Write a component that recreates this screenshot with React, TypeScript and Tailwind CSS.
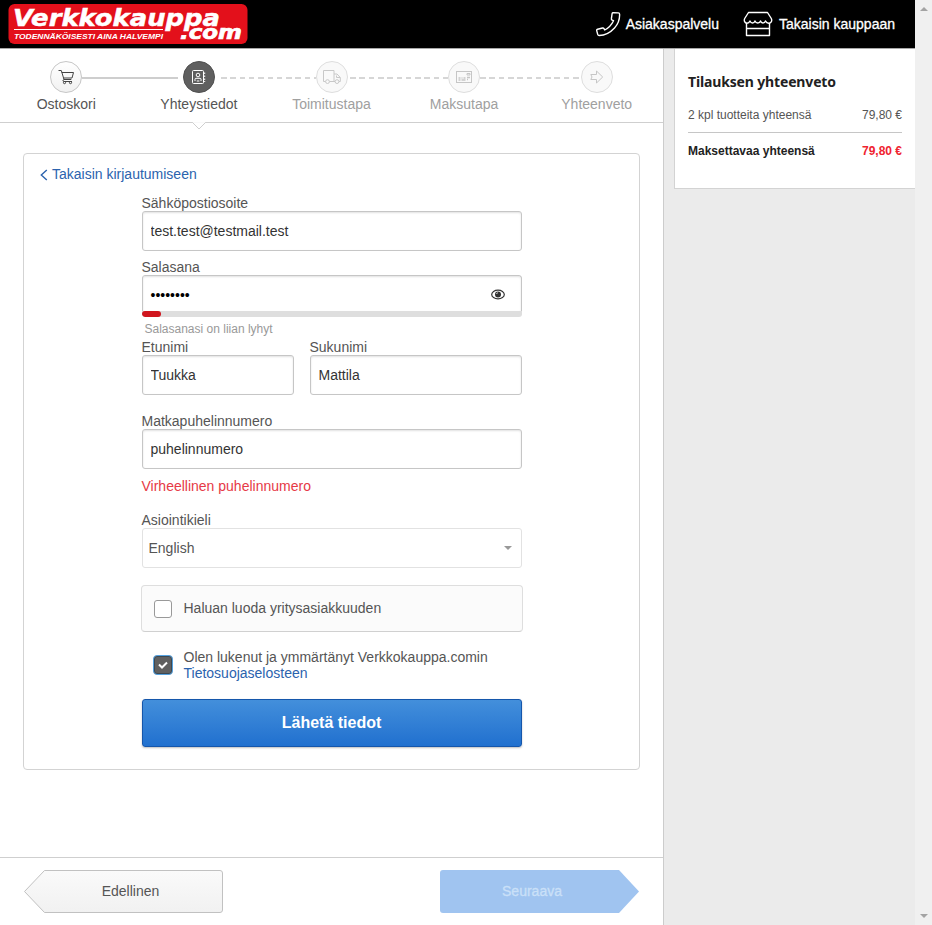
import React from "react";

const Logo = () => (
  <svg width="240" height="40" viewBox="0 0 240 40" className="block" role="img" aria-label="Verkkokauppa.com">
    <rect x=".5" width="239" height="40" rx="6" fill="#e3101b" />
    <g fill="#fff" fontWeight="bold" fontStyle="italic">
      <rect x="6" y="25" width="149" height="1" />
      <text x="5" y="21.7" fontSize="22.5" textLength="207" lengthAdjust="spacingAndGlyphs" fontFamily="DejaVu Sans" stroke="#fff" strokeWidth="0.5">Verkkokauppa</text>
      <text x="6" y="34.7" fontSize="7.6" textLength="149" lengthAdjust="spacingAndGlyphs" fontFamily="Liberation Sans">TODENNÄKÖISESTI AINA HALVEMPI</text>
      <text x="172" y="35.300" fontSize="19.5" textLength="62" lengthAdjust="spacingAndGlyphs" fontFamily="DejaVu Sans" stroke="#fff" strokeWidth="0.7">.com</text>
    </g>
  </svg>
);

const PhoneIcon = () => (
  <svg width="26" height="26" viewBox="0.5 0 26 26" fill="none" stroke="#fff" strokeWidth="1.4" strokeLinejoin="round">
    <path d="M17.600 1.700 L22.900 1.900 Q24 2 24.100 3.200 C24.300 8.300 22.700 13 19 17 C14.800 21.600 9 24.400 3.700 24.500 Q2.500 24.500 2.200 23.400 L1.200 19.600 Q1 18.500 2.100 18.200 L7 17 Q8.100 16.800 8.500 17.700 L9.200 19 C13 17 16 14 18 9.700 L16.600 9.100 Q15.700 8.700 15.900 7.700 L16.600 2.600 Q16.800 1.700 17.600 1.700Z" />
  </svg>
);

const StoreIcon = () => (
  <svg width="30" height="26" viewBox="0 0 30 26" fill="none" stroke="#fff" strokeWidth="1.400" strokeLinejoin="round">
    <path d="M5.500 1.500 H24.500 L28.300 7.500 C29.500 10 27.800 12.300 25.700 12.200 C23.800 12.200 23 11 22.500 10 C21.500 12.600 18.200 12.600 17.500 10 C16.500 12.600 13 12.600 12 10 C11 12.600 8 12.600 7 10 C6.300 11.600 5.400 12.200 4 12.200 C1.700 12 .7 9.700 1.700 7.500Z M3.500 12.500V24.500H26.500V12.500 M3.500 17.500H26.500" />
  </svg>
);

const CartIcon = () => (
  <svg width="18" height="16" viewBox="0 0 18 16" fill="none" stroke="#444" strokeWidth="1">
    <path d="M1.500 1.500H4.300L7 10.500H14.300M4.700 3.500H16.500L15 9H6.500M7 10.500C5.500 11 5.700 12.500 7 12.500H15" />
    <circle cx="7.500" cy="13.600" r="1.100" /><circle cx="13.500" cy="13.600" r="1.100" />
  </svg>
);

const ContactIcon = () => (
  <svg width="14" height="16" viewBox="0 0 14 16" fill="none" stroke="#fff" strokeWidth="1">
    <rect x=".5" y="1.500" width="11" height="13" rx="1" />
    <circle cx="6" cy="6" r="1.800" />
    <path d="M3 12V10.300Q3 9.300 4 9.300H8Q9 9.300 9 10.300V12M4.800 12h2.500M12.700 3.500v1.500M12.700 6.500v1.500M12.700 9.500V11M12.700 12v1" />
  </svg>
);

const TruckIcon = () => (
  <svg width="18" height="14" viewBox="0 0 18 14" fill="none" stroke="#c8c8c8" strokeWidth="1">
    <path d="M2.500 11.500H.5V.5H11V11.500H6.500M11 4H14L17.300 7.500V11.500H16M12 11.500H11M13.500 5.500V7.500H17" />
    <circle cx="4.500" cy="11.600" r="1.900" /><circle cx="14" cy="11.600" r="1.900" />
  </svg>
);

const CardIcon = () => (
  <svg width="16" height="12" viewBox="0 0 16 12" fill="none" stroke="#c6c6c6" strokeWidth="1">
    <rect x=".5" y=".5" width="15" height="11" />
    <path d="M11 2.500h3v1.500h-3z" />
    <path d="M2.500 7h2M5.500 7h1M7.500 7h2M11 6.500h3M2.500 9h2M5.500 9h4M11 8.500h1" strokeWidth="1.300" />
  </svg>
);

const ArrowIcon = () => (
  <svg width="14" height="14" viewBox="0 0 14 14" fill="none" stroke="#c6c6c6" strokeWidth="1">
    <path d="M.8 4.500H6.500V1L12.700 7L6.500 13V9.500H.8L2 7Z" />
  </svg>
);

const EyeIcon = () => (
  <svg width="14" height="11" viewBox="0 0 14 11" fill="none" stroke="#333" strokeWidth="1.200" className="-mt-px">
    <ellipse cx="7" cy="5.500" rx="6.300" ry="4.400" />
    <circle cx="7" cy="5.500" r="3" fill="#333" stroke="none" />
    <path d="M5.500 5Q5.700 3.900 6.800 3.700" stroke="#fff" strokeWidth=".8" />
  </svg>
);

const inputBox =
  "flex h-10 w-full items-center rounded-[3px] border border-[#c6c6c6] bg-white px-2 text-sm text-[#333] shadow-[inset_0_1px_2px_rgba(0,0,0,0.12)] outline-none";

const Field = ({ label, value, className = "" }: { label: string; value: string; className?: string }) => (
  <label className={`block text-sm leading-4 text-[#555] ${className}`}>
    <span className="block">{label}</span>
    <input className={inputBox} defaultValue={value} />
  </label>
);

const pending = "border border-[#dedede] bg-[#f9f9f9]";
const dashes = "bg-[repeating-linear-gradient(to_right,#d6d6d6_0,#d6d6d6_5.6px,transparent_5.6px,transparent_9.3px)]";
const steps = [
  { label: "Ostoskori", icon: <CartIcon />, circle: "border border-[#c6c6c6] bg-linear-to-b from-white to-[#f1f1f1]", text: "text-[#555]", line: "" },
  { label: "Yhteystiedot", icon: <ContactIcon />, circle: "border border-[#505050] bg-[#5f5f5f]", text: "text-[#555]", line: "mr-[5px] bg-[#cecece]" },
  { label: "Toimitustapa", icon: <TruckIcon />, circle: pending, text: "text-[#a0a0a0]", line: `ml-[6px] ${dashes}` },
  { label: "Maksutapa", icon: <CardIcon />, circle: pending, text: "text-[#a0a0a0]", line: `ml-[2px] ${dashes}` },
  { label: "Yhteenveto", icon: <ArrowIcon />, circle: pending, text: "text-[#a0a0a0]", line: dashes },
];

const Progress = () => (
  <nav className="h-[74px] border-b border-[#cfcfcf] bg-white">
    <div className="flex items-center px-[50px] pt-3">
      {steps.map((s, i) => (
        <React.Fragment key={s.label}>
          {i > 0 && (
            <span className="flex flex-1 pt-0.5">
              <span className={`h-0.5 flex-1 ${s.line}`} />
            </span>
          )}
          <span className={`flex size-8 shrink-0 items-center justify-center rounded-full ${s.circle}`}>{s.icon}</span>
        </React.Fragment>
      ))}
    </div>
    <div className="grid grid-cols-5 pt-[3px] text-center text-sm leading-4">
      {steps.map((s) => (
        <span key={s.label} className={s.text}>{s.label}</span>
      ))}
    </div>
  </nav>
);

const RegistrationForm = () => (
  <section className="mx-[23px] mt-[30px] h-[617px] rounded-[4px] border border-[#d3d3d3] bg-white pt-3">
    <a className="ml-4 flex h-4 items-center gap-1 text-sm leading-4 text-[#2b63ae]">
      <svg width="8" height="12" viewBox="0 0 8 12" className="mt-0.5" fill="none" stroke="#2b63ae" strokeWidth="1.400"><path d="M6.800 1L1.300 6L6.800 11" /></svg>
      Takaisin kirjautumiseen
    </a>
    <form className="mt-[13px] ml-[117.5px] w-[380px]" onSubmit={(e) => e.preventDefault()}>
      <Field label="Sähköpostiosoite" value="test.test@testmail.test" />
      <div className="mt-2 text-sm leading-4 text-[#555]">
        <div>Salasana</div>
        <div className="h-[42px] overflow-hidden rounded-[3px]">
          <div className="flex h-9 items-center justify-between rounded-t-[3px] border border-b-0 border-[#c6c6c6] bg-white pt-[3px] pr-4 pl-2 text-black shadow-[inset_0_1px_2px_rgba(0,0,0,0.12)]">
            <span>••••••••</span>
            <EyeIcon />
          </div>
          <div className="h-1.5 bg-[#dedede]">
            <div className="h-full w-[19px] rounded-[3px] bg-[#d0161e]" />
          </div>
        </div>
        <div className="mt-1 h-[18px] pl-[3px] text-xs leading-4 text-[#999]">Salasanasi on liian lyhyt</div>
      </div>
      <div className="flex gap-4">
        <Field label="Etunimi" value="Tuukka" className="w-[152px]" />
        <Field label="Sukunimi" value="Mattila" className="w-[212px]" />
      </div>
      <Field label="Matkapuhelinnumero" value="puhelinnumero" className="mt-[18px]" />
      <p className="mt-[9px] text-sm leading-4 text-[#e63946]">Virheellinen puhelinnumero</p>
      <div className="mt-[18px] text-sm leading-4 text-[#555]">
        <div>Asiointikieli</div>
        <div className="flex h-10 items-center justify-between rounded-[3px] border border-[#e2e2e2] bg-white pr-[9px] pl-1.5">
          <span>English</span>
          <span className="border-x-4 border-t-4 border-x-transparent border-t-[#999]" />
        </div>
      </div>
      <div className="-mx-px mt-[17px] flex h-[47px] items-center rounded-[4px] border border-[#dedede] border-b-[#d0d0d0] bg-[#fbfbfb] pl-3 text-sm leading-4 text-[#555]">
        <span className="mr-3 size-[18px] rounded-[3px] border border-[#999] bg-white" />
        <span className="pb-0.5">Haluan luoda yritysasiakkuuden</span>
      </div>
      <div className="mt-[17px] flex h-8 items-center pl-[11px] text-sm leading-4 text-[#555]">
        <span className="mr-[11px] flex size-5 shrink-0 items-center justify-center rounded-[4px] border border-[#56a2e0] bg-[#606060] shadow-[inset_0_0_0_1px_#3c4852]">
          <svg width="12" height="10" viewBox="0 0 12 10" fill="none" stroke="#fff" strokeWidth="2"><path d="M2 4.500L5 7.500L10 2.500" /></svg>
        </span>
        <span>
          Olen lukenut ja ymmärtänyt Verkkokauppa.comin
          <br />
          <a className="text-[#2b63ae]">Tietosuojaselosteen</a>
        </span>
      </div>
      <button className="mt-[18px] block h-12 w-full rounded-[3px] border border-[#1556ab] bg-linear-to-b from-[#438fdb] to-[#2070cf] text-base font-bold text-white shadow-[0_1px_2px_rgba(0,0,0,0.25)]">
        Lähetä tiedot
      </button>
    </form>
  </section>
);

const FooterNav = () => (
  <footer className="flex h-[68px] justify-between border-t border-[#cfcfcf] bg-white px-6 pt-3 text-sm leading-4">
    <button className="grid h-[43px] w-[199px] items-center text-[#555]">
      <svg width="199" height="43" className="col-start-1 row-start-1">
        <defs>
          <linearGradient id="prev" x1="0" y1="0" x2="0" y2="1"><stop stopColor="#fafafa" /><stop offset="1" stopColor="#f1f1f1" /></linearGradient>
        </defs>
        <path d="M20.500 .5H196Q198.500 .5 198.500 3V40Q198.500 42.500 196 42.500H20.500L.5 21.500Z" fill="url(#prev)" stroke="#c1c1c1" />
      </svg>
      <span className="col-start-1 row-start-1 pb-px pl-[14px]">Edellinen</span>
    </button>
    <button className="grid h-[43px] w-[199px] items-center text-[#cae0f8]">
      <svg width="199" height="43" className="col-start-1 row-start-1">
        <path d="M3 0H179L199 21.500L179 43H3Q0 43 0 40V3Q0 0 3 0Z" fill="#a0c4f0" />
      </svg>
      <span className="col-start-1 row-start-1 pr-[15px] pb-px [-webkit-text-stroke:0.3px_#cae0f8]">Seuraava</span>
    </button>
  </footer>
);

const Summary = () => (
  <aside className="w-[252px] border-l border-[#cccccc] bg-[#ebebeb] pl-2.5">
    <div className="h-[140px] border-b border-l border-[#d3d3d3] bg-white pt-[23px] pr-[13px] pl-[13px] text-xs text-[#555]">
      <h2 className="font-['Noto_Sans',sans-serif] text-[14px] leading-5 font-bold tracking-[-0.15px] whitespace-nowrap text-[#222]">Tilauksen yhteenveto</h2>
      <div className="mt-[15px] flex h-[26px] justify-between border-b border-[#c6c6c6] leading-4">
        <span>2 kpl tuotteita yhteensä</span>
        <span>79,80 €</span>
      </div>
      <div className="mt-2.5 flex justify-between leading-4 font-bold">
        <span className="text-[#222]">Maksettavaa yhteensä</span>
        <span className="text-[#ef2330]">79,80 €</span>
      </div>
    </div>
  </aside>
);

export default function App() {
  return (
    <div className="flex h-[925px] w-[932px] overflow-hidden bg-white font-['Liberation_Sans',Arial,sans-serif]">
      <div className="flex w-[915px] flex-col">
        <header className="flex h-12 shrink-0 items-center justify-between bg-black pr-5 pl-2 text-sm text-white">
          <Logo />
          <div className="flex items-center [-webkit-text-stroke:0.3px_white]">
            <PhoneIcon />
            <span className="ml-1">Asiakaspalvelu</span>
            <span className="ml-6 flex"><StoreIcon /></span>
            <span className="ml-1.5">Takaisin kauppaan</span>
          </div>
        </header>
        <div className="flex flex-1">
          <main className="relative flex w-[663px] flex-col border-t border-[#a8a8a8]">
            <Progress />
            <svg width="14" height="8" viewBox="0 0 14 8" className="absolute top-[73px] left-[192px]"><path d="M.5 .5L7 7L13.500 .5" fill="#fff" stroke="#cfcfcf" /><path d="M1 0H13" stroke="#fff" strokeWidth="1.500" /></svg>
            <RegistrationForm />
            <div className="flex-1" />
            <FooterNav />
          </main>
          <div className="flex border-t border-[#a8a8a8]"><Summary /></div>
        </div>
      </div>
      <div className="flex w-[17px] flex-col items-center justify-between bg-[#f0f0f0] pt-[7px] pb-[7px]">
        <span className="border-x-4 border-b-4 border-x-transparent border-b-[#a3a3a3]" />
        <span className="border-x-4 border-t-4 border-x-transparent border-t-[#a3a3a3]" />
      </div>
    </div>
  );
}
